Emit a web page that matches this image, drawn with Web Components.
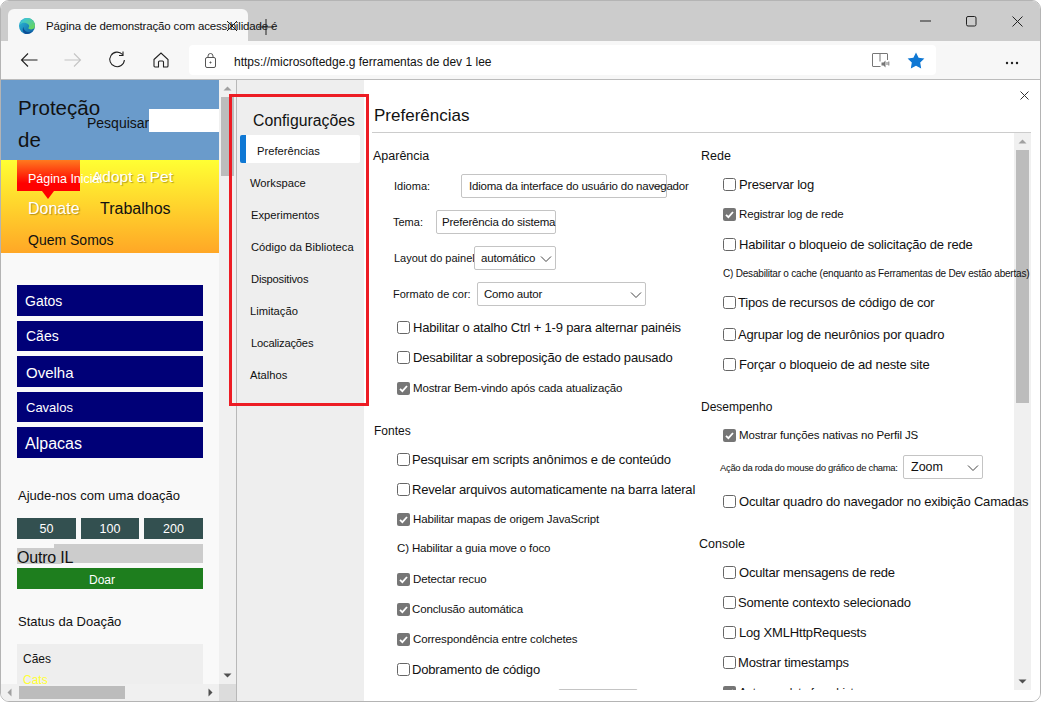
<!DOCTYPE html>
<html lang="pt">
<head>
<meta charset="utf-8">
<title>Configurações</title>
<style>
  html, body { margin: 0; background: #fff; font-family: "Liberation Sans", Arial, sans-serif; }
</style>
</head>
<body>
<browser-window>
  <demo-page slot="page"></demo-page>
  <settings-nav slot="nav">
    <nav-link active style="--x:17px">Preferências</nav-link>
    <nav-link style="--x:10px">Workspace</nav-link>
    <nav-link style="--x:11px">Experimentos</nav-link>
    <nav-link style="--x:11px">Código da Biblioteca</nav-link>
    <nav-link style="--x:11px;--ls:-.2px">Dispositivos</nav-link>
    <nav-link style="--x:10px">Limitação</nav-link>
    <nav-link style="--x:11px;--ls:-.2px">Localizações</nav-link>
    <nav-link style="--x:10px">Atalhos</nav-link>
  </settings-nav>
  <settings-main slot="main">
    <settings-col slot="a">
      <set-head style="--t:11px;--x:1px">Aparência</set-head>
      <set-field label="Idioma:" style="--t:6px;--x:22px;--w:67px;--sw:206px;--pad:7px" chev>Idioma da interface do usuário do navegador</set-field>
      <set-field label="Tema:" style="--t:12px;--x:21px;--w:43px;--sw:120px;--pad:5px">Preferência do sistema</set-field>
      <set-field label="Layout do painel:" style="--t:12px;--x:22px;--w:80px;--sw:82px;--pad:6px" chev>automático</set-field>
      <set-field label="Formato de cor:" style="--t:12px;--x:21px;--w:84px;--sw:169px;--pad:6px" chev>Como autor</set-field>
      <set-check style="--t:9px;--x:25px">Habilitar o atalho Ctrl + 1-9 para alternar painéis</set-check>
      <set-check style="--t:6px;--x:25px">Desabilitar a sobreposição de estado pausado</set-check>
      <set-check checked small style="--t:7px;--x:25px">Mostrar Bem-vindo após cada atualização</set-check>
      <set-head style="--t:19px;--x:2px;--fs:12px">Fontes</set-head>
      <set-check style="--t:4px;--x:25px;--g:2px">Pesquisar em scripts anônimos e de conteúdo</set-check>
      <set-check style="--t:6px;--x:25px;--g:2px">Revelar arquivos automaticamente na barra lateral</set-check>
      <set-check checked small style="--t:6px;--x:25px">Habilitar mapas de origem JavaScript</set-check>
      <set-head style="--t:5px;--x:25px;--fs:11.5px;--hls:-.15px">C) Habilitar a guia move o foco</set-head>
      <set-check checked small style="--t:7px;--x:25px">Detectar recuo</set-check>
      <set-check checked small style="--t:6px;--x:25px;--g:2px">Conclusão automática</set-check>
      <set-check checked small style="--t:6px;--x:25px">Correspondência entre colchetes</set-check>
      <set-check style="--t:6px;--x:25px;--g:2px">Dobramento de código</set-check>
      <set-field label="" style="--t:8px;--x:186px;--w:0px;--sw:80px;--pad:7px"></set-field>
    </settings-col>
    <settings-col slot="b">
      <set-head style="--t:11px;--x:2px">Rede</set-head>
      <set-check style="--t:4px;--x:24px">Preservar log</set-check>
      <set-check checked small style="--t:6px;--x:24px">Registrar log de rede</set-check>
      <set-check style="--t:6px;--x:24px">Habilitar o bloqueio de solicitação de rede</set-check>
      <set-head style="--t:5px;--x:24px;--fs:10px;--hls:-.2px">C) Desabilitar o cache (enquanto as Ferramentas de Dev estão abertas)</set-head>
      <set-check style="--t:5px;--x:24px;--g:2px">Tipos de recursos de código de cor</set-check>
      <set-check style="--t:8px;--x:24px;--g:2px">Agrupar log de neurônios por quadro</set-check>
      <set-check style="--t:6px;--x:24px">Forçar o bloqueio de ad neste site</set-check>
      <set-head style="--t:19px;--x:2px;--fs:12px">Desempenho</set-head>
      <set-check checked small style="--t:4px;--x:24px">Mostrar funções nativas no Perfil JS</set-check>
      <set-field label="Ação da roda do mouse do gráfico de chama:" style="--t:8px;--x:21px;--w:183px;--sw:80px;--pad:7px;--lfs:9.5px;--lls:-.35px;--vfs:12.5px;--vls:0" chev>Zoom</set-field>
      <set-check style="--t:10px;--x:24px">Ocultar quadro do navegador no exibição Camadas</set-check>
      <set-head style="--t:19px;--x:0px">Console</set-head>
      <set-check style="--t:4px;--x:24px">Ocultar mensagens de rede</set-check>
      <set-check style="--t:6px;--x:24px;--g:2px">Somente contexto selecionado</set-check>
      <set-check style="--t:6px;--x:24px">Log XMLHttpRequests</set-check>
      <set-check style="--t:6px;--x:24px;--g:2px">Mostrar timestamps</set-check>
      <set-check checked small style="--t:6px;--x:24px">Autocomplete from history</set-check>
    </settings-col>
  </settings-main>
</browser-window>

<script>
const chevron = `<svg width="12" height="8" viewBox="0 0 12 8" fill="none" stroke="#444" stroke-width="1"><path d="M1 1.5l5 5 5-5"/></svg>`;

class ScrollBar extends HTMLElement {
  constructor() {
    super();
    this.attachShadow({ mode: 'open' });
    const horizontal = this.hasAttribute('horizontal');
    this.shadowRoot.innerHTML = `
      <style>
        :host{ display:flex; flex:none; background:#f0f0f0; flex-direction:${horizontal ? 'row' : 'column'}; box-sizing:border-box; }
        .arrow{ flex:none; display:flex; align-items:center; justify-content:center; width:var(--bar,17px); height:var(--bar,17px); }
        .track{ flex:1; min-width:0; min-height:0; display:flex; flex-direction:${horizontal ? 'row' : 'column'}; }
        .thumb{ background:#bcbcbc; flex:none; ${horizontal
          ? 'width:var(--len); height:13px; margin:2px 0 0 var(--start);'
          : 'height:var(--len); width:13px; margin:var(--start) 0 0 2px;'} }
      </style>
      <div class="arrow"><svg width="9" height="9" viewBox="0 0 9 9"><path fill="${this.getAttribute('upfill') || '#a0a0a0'}" d="${horizontal ? 'M6.5 .5v8l-4-4z' : 'M.5 6.5h8l-4-4z'}"/></svg></div>
      <div class="track"><div class="thumb"></div></div>
      <div class="arrow"><svg width="9" height="9" viewBox="0 0 9 9"><path fill="#505050" d="${horizontal ? 'M2.5 .5v8l4-4z' : 'M.5 2.5h8l-4 4z'}"/></svg></div>`;
  }
}
customElements.define('scroll-bar', ScrollBar);

class BrowserWindow extends HTMLElement {
  constructor() {
    super();
    this.attachShadow({ mode: 'open' });
    this.shadowRoot.innerHTML = `
      <style>
        :host{ display:flex; flex-direction:column; width:1041px; height:702px; box-sizing:border-box; border:1px solid #b4b4b4; border-radius:9px; overflow:hidden; background:#fff; color:#111; }
        .titlebar{ height:40px; background:#cccccc; flex:none; display:flex; box-sizing:border-box; padding:8px 0 0 7px; position:relative; }
        .tab{ width:240px; height:32px; background:#f7f7f7; border-radius:6px 6px 0 0; display:flex; align-items:center; box-sizing:border-box; padding:1px 0 0 11px; font-size:11.5px; letter-spacing:-.15px; white-space:nowrap; flex:none; }
        .tab svg{ flex:none; margin-right:11px; }
        .tab-x, .tab-new{ flex:none; position:absolute; top:18px; }
        .tab-x{ left:224px; } .tab-new{ left:257px; }
        .win{ margin:-8px 0 0 auto; display:flex; height:40px; }
        .win span{ width:46px; display:flex; align-items:center; justify-content:center; }
        .toolbar{ height:39px; background:#f7f7f7; flex:none; display:flex; align-items:center; border-bottom:1px solid #bcbcbc; box-sizing:border-box; }
        .tb{ width:44px; flex:none; display:flex; justify-content:center; }
        .tb:first-child{ margin-left:6px; }
        .address{ margin-left:6px; width:747px; height:30px; background:#fff; border-radius:4px; display:flex; align-items:center; font-size:12px; flex:none; }
        .lock{ margin:0 18px 0 16px; flex:none; }
        .url{ flex:1; white-space:nowrap; padding-top:3px; }
        .more{ margin-left:69px; }
        .content{ flex:1; display:flex; min-height:0; position:relative; }
        .left{ width:235px; flex:none; display:flex; flex-direction:column; border-right:1px solid #b8b8b8; }
        .page-row{ flex:1; display:flex; min-height:0; }
        .page-row ::slotted(*){ flex:1; min-width:0; }
        .hbar{ flex:none; height:17px; display:flex; }
        .corner{ width:17px; background:#dcdcdc; flex:none; }
        .hbar scroll-bar{ flex:1; }
        .nav{ width:127px; flex:none; background:#eeeeee; }
        .main{ flex:1; min-width:0; }
        .outline{ position:absolute; left:228px; top:14px; width:140px; height:312px; box-sizing:border-box; border:3px solid #ed1c24; pointer-events:none; }
      </style>
      <div class="titlebar">
        <div class="tab">
          <svg width="16" height="16" viewBox="0 0 16 16">
            <defs>
              <linearGradient id="e1" x1="0" y1="0" x2="1" y2="1"><stop offset="0" stop-color="#2fc0d8"/><stop offset="1" stop-color="#0c59a4"/></linearGradient>
              <linearGradient id="e2" x1="0" y1="0" x2="1" y2="1"><stop offset="0" stop-color="#35c1f1"/><stop offset="1" stop-color="#6fd84a"/></linearGradient>
            </defs>
            <circle cx="8" cy="8" r="8" fill="url(#e1)"/>
            <path fill="url(#e2)" d="M1 6.5C2 2.600 5 0 8 0c4.600 0 8 3.400 8 7.800 0 2.200-1.700 3.600-3.800 3.600-1.500 0-2.800-.6-3-1.300 1.200-.6 1.400-2.400.3-3.500C7.500 4.500 3 4 1 6.500z"/>
            <path fill="#0c4f96" d="M4.400 8.800c0 3 2.600 5.400 6 5.300 1 0 2-.3 2.800-.8-1.500 1.700-3.300 2.700-5.200 2.700-1.500 0-2.700-.5-3.500-1.800C3.500 12.800 3.600 10.400 4.400 8.800z"/>
          </svg>
          <span>Página de demonstração com acessibilidade é</span>
        </div>
        <svg class="tab-x" width="14" height="14" viewBox="0 0 14 14" stroke="#222" fill="none"><path d="M2 2l10 10M12 2L2 12"/></svg>
        <svg class="tab-new" width="16" height="16" viewBox="0 0 16 16" stroke="#222" fill="none"><path d="M8 0v16M0 8h16"/></svg>
        <div class="win">
          <span><svg width="11" height="2" viewBox="0 0 11 2"><path d="M0 1h11" stroke="#222"/></svg></span>
          <span><svg width="11" height="11" viewBox="0 0 11 11"><rect x=".5" y=".5" width="9.500" height="9.500" rx="1.500" fill="none" stroke="#222"/></svg></span>
          <span><svg width="11" height="11" viewBox="0 0 11 11"><path d="M.5.5l10 10M10.500.5l-10 10" stroke="#222" fill="none"/></svg></span>
        </div>
      </div>
      <div class="toolbar">
        <span class="tb"><svg width="18" height="16" viewBox="0 0 18 16" fill="none" stroke="#222" stroke-width="1.100"><path d="M1.500 8h16M8 1.500L1.500 8 8 14.500"/></svg></span>
        <span class="tb"><svg width="18" height="16" viewBox="0 0 18 16" fill="none" stroke="#c4c4c4" stroke-width="1.100"><path d="M.5 8h16M10 1.500L16.500 8 10 14.500"/></svg></span>
        <span class="tb"><svg width="18" height="18" viewBox="0 0 18 18" fill="none" stroke="#222" stroke-width="1.100"><path d="M14.500 3.500A7.300 7.300 0 1 0 16.400 9M15 .5v4h-4"/></svg></span>
        <span class="tb"><svg width="16" height="16" viewBox="0 0 16 16" fill="none" stroke="#222" stroke-width="1.100"><path d="M1 7.500L8 1l7 6.500V14a1 1 0 0 1-1 1h-3.500V10a1 1 0 0 0-1-1h-3a1 1 0 0 0-1 1v5H2a1 1 0 0 1-1-1z"/></svg></span>
        <div class="address">
          <svg class="lock" width="11" height="15" viewBox="0 0 11 15" fill="none" stroke="#555"><rect x=".5" y="4.500" width="10" height="10" rx="1.500"/><path d="M3 4.500V3a2.500 2.500 0 0 1 5 0v1.500"/><circle cx="5.500" cy="9.500" r=".6" fill="#555"/></svg>
          <span class="url">https://microsoftedge.g ferramentas de dev 1 lee</span>
          <svg width="18" height="15" viewBox="0 0 18 15" fill="none" stroke="#777" style="margin-right:17px;flex:none"><path d="M8.500 13.500H1a.5.5 0 0 1-.5-.5V1A.5.5 0 0 1 1 .5h14a.5.5 0 0 1 .5.500V7M8 .5v8"/><path d="M9.500 9.500h2l2-2v7l-2-2h-2z" fill="#777" stroke="none"/><path d="M15 9v3M16.800 8.500v4"/></svg>
          <svg width="18" height="17" viewBox="0 0 18 17" style="margin-right:11px;flex:none"><path fill="#0f78d4" d="M9 .4l2.600 5.300 5.800.8-4.200 4.100 1 5.800L9 13.700l-5.200 2.700 1-5.800L.6 6.500l5.800-.8z"/></svg>
        </div>
        <span class="more"><svg width="14" height="4" viewBox="0 0 14 4" fill="#222"><circle cx="2" cy="2" r="1.200"/><circle cx="7" cy="2" r="1.200"/><circle cx="12" cy="2" r="1.200"/></svg></span>
      </div>
      <div class="content">
        <div class="left">
          <div class="page-row">
            <slot name="page"></slot>
            <scroll-bar style="--len:79px;--start:0px"></scroll-bar>
          </div>
          <div class="hbar">
            <scroll-bar horizontal style="--len:106px;--start:1px"></scroll-bar>
            <div class="corner"></div>
          </div>
        </div>
        <div class="nav"><slot name="nav"></slot></div>
        <div class="main"><slot name="main"></slot></div>
        <div class="outline"></div>
      </div>`;
  }
}
customElements.define('browser-window', BrowserWindow);

class DemoPage extends HTMLElement {
  constructor() {
    super();
    this.attachShadow({ mode: 'open' });
    this.shadowRoot.innerHTML = `
      <style>
        :host{ display:block; background:#f9f9f9; overflow:hidden; font-size:13px; color:#111; }
        header{ height:80px; background:#6a9bcb; display:flex; box-sizing:border-box; padding-left:17px; }
        h1{ margin:12px 0 0; width:69px; flex:none; font-weight:normal; font-size:20.5px; line-height:32px; }
        .search{ font-size:14px; margin-top:35px; flex:none; width:62px; white-space:nowrap; }
        .search-box{ background:#fff; flex:1; height:23px; margin-top:29px; }
        nav{ height:93px; background:linear-gradient(#ffff33,#ffa726); display:flex; flex-direction:column; padding-left:16px; color:#fff; white-space:nowrap; }
        .r{ display:flex; }
        .home{ width:63px; height:31px; flex:none; box-sizing:border-box; padding:12px 0 0 11px; font-size:12.5px; background:linear-gradient(#ff7a1f,#ff0000 75%); position:relative; }
        .home::after{ content:""; position:absolute; left:25px; top:31px; border:6px solid transparent; border-top:8px solid #ff0000; border-bottom:0; }
        .pet{ margin:8px 0 0 12px; font-size:15.5px; text-shadow:1px 1px 1px rgba(90,70,0,.45); }
        .r2{ margin-top:5px; padding-left:11px; font-size:16px; height:26px; align-items:center; }
        .donate{ width:72px; flex:none; text-shadow:1px 1px 1px rgba(90,70,0,.45); }
        .jobs{ color:#111; font-size:16px; }
        .about{ color:#111; font-size:14px; padding-left:11px; margin-top:10px; }
        main{ padding:32px 16px 0; }
        .pets{ display:flex; flex-direction:column; gap:5px; }
        .pets div{ background:#000077; color:#fff; padding:var(--pt,0) 0 0 var(--p,8px); box-sizing:border-box; display:flex; align-items:center; height:var(--h); font-size:var(--f); }
        .help{ margin:30px 0 0 1px; height:16px; line-height:16px; }
        .amounts{ display:grid; grid-template-columns:59px 58px 59px; gap:5px; margin-top:14px; }
        .amounts div{ background:#335050; color:#fff; height:21px; line-height:22px; text-align:center; font-size:12.5px; }
        .other{ margin-top:5px; height:20px; display:grid; font-size:16px; letter-spacing:-.2px; color:#111; }
        .other i{ grid-area:1/1; margin-left:37px; background:#ccc; height:19px; }
        .other span{ grid-area:1/1; position:relative; background:#ccc; width:45px; height:16px; margin-top:4px; line-height:19px; white-space:nowrap; }
        .give{ background:#1e7e1e; color:#fff; text-align:center; height:21px; line-height:25px; font-size:12px; margin-top:4px; padding-right:16px; }
        .status{ margin:25px 0 0 1px; height:16px; line-height:16px; }
        .box{ background:#eee; margin-top:14px; padding:5px 6px; height:40px; box-sizing:border-box; overflow:hidden; font-size:12px; line-height:21px; }
        .box .y{ color:#ffff33; }
        .wrap{ height:100%; overflow:hidden; }
      </style>
      <div class="wrap">
      <header>
        <h1>Proteção de</h1>
        <span class="search">Pesquisar</span>
        <div class="search-box"></div>
      </header>
      <nav>
        <div class="r"><span class="home">Página Inicial</span><span class="pet">Adopt a Pet</span></div>
        <div class="r r2"><span class="donate">Donate</span><span class="jobs">Trabalhos</span></div>
        <div class="about">Quem Somos</div>
      </nav>
      <main>
        <div class="pets">
          <div style="--h:31px;--f:14px">Gatos</div>
          <div style="--h:30px;--f:14px;--p:9px">Cães</div>
          <div style="--h:31px;--f:15px;--p:9px;--pt:2px">Ovelha</div>
          <div style="--h:30px;--f:13px;--p:9px">Cavalos</div>
          <div style="--h:31px;--f:16px;--pt:3px">Alpacas</div>
        </div>
        <div class="help">Ajude-nos com uma doação</div>
        <div class="amounts"><div>50</div><div>100</div><div>200</div></div>
        <div class="other"><i></i><span>Outro IL</span></div>
        <div class="give">Doar</div>
        <div class="status">Status da Doação</div>
        <div class="box"><div>Cães</div><div class="y">Cats</div></div>
      </main>
      </div>`;
  }
}
customElements.define('demo-page', DemoPage);

class SettingsNav extends HTMLElement {
  constructor() {
    super();
    this.attachShadow({ mode: 'open' });
    this.shadowRoot.innerHTML = `
      <style>
        :host{ display:block; height:100%; box-sizing:border-box; padding:0 4px 0 3px; }
        h2{ margin:0; font-weight:normal; font-size:15.8px; line-height:20px; padding:31px 0 4px 13px; white-space:nowrap; }
        .links{ display:flex; flex-direction:column; }
      </style>
      <h2>Configurações</h2>
      <div class="links"><slot></slot></div>`;
  }
}
customElements.define('settings-nav', SettingsNav);

class NavLink extends HTMLElement {
  constructor() {
    super();
    this.attachShadow({ mode: 'open' });
    this.shadowRoot.innerHTML = `
      <style>
        :host{ display:flex; align-items:center; height:32px; font-size:11.2px; letter-spacing:var(--ls,0); padding-left:var(--x,10px); white-space:nowrap; box-sizing:border-box; }
        :host([active]){ height:28px; margin-bottom:4px; background:#fff; border-radius:2px; border-left:6px solid #0f78d4; padding:3px 0 0 11px; }
      </style>
      <slot></slot>`;
  }
}
customElements.define('nav-link', NavLink);

class SettingsMain extends HTMLElement {
  constructor() {
    super();
    this.attachShadow({ mode: 'open' });
    this.shadowRoot.innerHTML = `
      <style>
        :host{ display:flex; flex-direction:column; height:100%; box-sizing:border-box; padding:0 9px 11px 8px; background:#fff; position:relative; }
        h2{ margin:0; height:53px; flex:none; box-sizing:border-box; padding:24px 0 0 2px; font-weight:normal; font-size:17px; line-height:24px; border-bottom:1px solid #ccc; }
        .close{ position:absolute; top:11px; right:11px; }
        .body{ flex:1; display:flex; min-height:0; overflow:hidden; }
        .cols{ flex:1; min-width:0; display:grid; grid-template-columns:327px 1fr; position:relative; z-index:1; }
        scroll-bar{ width:17px; }
      </style>
      <h2>Preferências</h2>
      <svg class="close" width="9" height="9" viewBox="0 0 9 9" fill="none" stroke="#333"><path d="M.5.5l8 8M8.500.5l-8 8"/></svg>
      <div class="body">
        <div class="cols"><slot name="a"></slot><slot name="b"></slot></div>
        <scroll-bar style="--len:253px;--start:0px"></scroll-bar>
      </div>`;
  }
}
customElements.define('settings-main', SettingsMain);

class SettingsCol extends HTMLElement {
  constructor() {
    super();
    this.attachShadow({ mode: 'open' });
    this.shadowRoot.innerHTML = `
      <style>:host{ display:flex; flex-direction:column; min-width:0; }</style>
      <slot></slot>`;
  }
}
customElements.define('settings-col', SettingsCol);

const rowStyle = `
  :host{ display:flex; align-items:center; flex:none; height:24px; margin-top:var(--t,6px); margin-left:var(--x,0); white-space:nowrap; }`;

class SetHead extends HTMLElement {
  constructor() {
    super();
    this.attachShadow({ mode: 'open' });
    this.shadowRoot.innerHTML = `
      <style>${rowStyle} :host{ font-size:var(--fs,12.5px); letter-spacing:var(--hls,0); }</style>
      <slot></slot>`;
  }
}
customElements.define('set-head', SetHead);

class SetField extends HTMLElement {
  constructor() {
    super();
    this.attachShadow({ mode: 'open' });
    this.shadowRoot.innerHTML = `
      <style>${rowStyle}
        label{ width:var(--w); flex:none; font-size:var(--lfs,11px); letter-spacing:var(--lls,0); }
        .select{ width:var(--sw); height:24px; box-sizing:border-box; border:1px solid #c4c4c4; border-radius:2px; background:#fff; display:flex; align-items:center; padding-left:var(--pad); font-size:var(--vfs,11.5px); letter-spacing:var(--vls,-.2px); position:relative; flex:none; }
        svg{ position:absolute; right:3px; top:8px; }
      </style>
      <label>${this.getAttribute('label') || ''}</label>
      <div class="select"><slot></slot>${this.hasAttribute('chev') ? chevron : ''}</div>`;
  }
}
customElements.define('set-field', SetField);

class SetCheck extends HTMLElement {
  constructor() {
    super();
    this.attachShadow({ mode: 'open' });
    const tick = `<svg width="13" height="13" viewBox="0 0 13 13"><rect width="13" height="13" rx="2" fill="#767676"/><path d="M3 6.800l2.400 2.400L10 4" fill="none" stroke="#fff" stroke-width="1.800"/></svg>`;
    const empty = `<svg width="13" height="13" viewBox="0 0 13 13"><rect x=".5" y=".5" width="12" height="12" rx="2" fill="#fff" stroke="#666"/></svg>`;
    this.shadowRoot.innerHTML = `
      <style>${rowStyle}
        :host{ font-size:13px; letter-spacing:-.18px; }
        :host([small]){ font-size:11.5px; letter-spacing:-.14px; }
        svg{ flex:none; margin-right:var(--g,3px); }
      </style>
      ${this.hasAttribute('checked') ? tick : empty}<slot></slot>`;
  }
}
customElements.define('set-check', SetCheck);
</script>
</body>
</html>
